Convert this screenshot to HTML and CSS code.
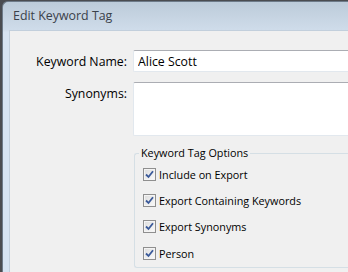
FILE: index.html
```html
<!DOCTYPE html>
<html lang="en">
<head>
  <meta charset="UTF-8">
  <title>Edit Keyword Tag</title>
  <link rel="stylesheet" href="styles.css">
</head>
<body>
  <div class="window">
    <div class="titlebar">Edit Keyword Tag</div>
    <div class="client">
      <div class="form">
        <label class="label" for="kwName">Keyword Name:</label>
        <input type="text" id="kwName" class="field" value="Alice Scott">
        <label class="label label-top" for="kwSyn">Synonyms:</label>
        <textarea id="kwSyn" class="field area"></textarea>
      </div>
      <fieldset class="group">
        <legend>Keyword Tag Options</legend>
        <label class="check"><span class="box"><svg viewBox="0 0 9 9" width="9" height="9"><path d="M1 4.5 L3.5 7 L8 1.2" fill="none" stroke="#3b5a9a" stroke-width="1.8"/></svg></span>Include on Export</label>
        <label class="check"><span class="box"><svg viewBox="0 0 9 9" width="9" height="9"><path d="M1 4.5 L3.5 7 L8 1.2" fill="none" stroke="#3b5a9a" stroke-width="1.8"/></svg></span>Export Containing Keywords</label>
        <label class="check"><span class="box"><svg viewBox="0 0 9 9" width="9" height="9"><path d="M1 4.5 L3.5 7 L8 1.2" fill="none" stroke="#3b5a9a" stroke-width="1.8"/></svg></span>Export Synonyms</label>
        <label class="check"><span class="box"><svg viewBox="0 0 9 9" width="9" height="9"><path d="M1 4.5 L3.5 7 L8 1.2" fill="none" stroke="#3b5a9a" stroke-width="1.8"/></svg></span>Person</label>
      </fieldset>
    </div>
  </div>
</body>
</html>
```

FILE: styles.css
```css
* {
  box-sizing: border-box;
}

html, body {
  margin: 0;
  padding: 0;
  width: 348px;
  height: 272px;
  overflow: hidden;
  background: #4a4c50;
  font-family: "Open Sans", "Noto Sans", sans-serif;
  font-size: 12.3px;
  color: #000;
}

.window {
  margin: 1px 0 0 2px;
  height: 271px;
  border-top-left-radius: 6px;
  border-top: 1px solid #6d7a88;
  border-left: 1px solid #6d7a88;
  background: linear-gradient(#bccbd9, #cfdcea 28px, #d6e3f1 30px);
  padding-left: 6px;
  display: flex;
  flex-direction: column;
}

.titlebar {
  height: 28px;
  padding: 5px 0 0 4px;
  color: #3a414a;
  font-size: 12.4px;
}

.client {
  flex: 1;
  background: #f0f0f0;
  border-left: 1px solid #c2cfdc;
  border-top: 1px solid #c2cfdc;
  padding-top: 19px;
}

.form {
  display: grid;
  grid-template-columns: 117px 1fr;
  column-gap: 6px;
  row-gap: 10px;
  align-items: center;
}

.label {
  text-align: right;
}

.label-top {
  align-self: start;
  padding-top: 3px;
}

.field {
  font: inherit;
  margin: 0;
  height: 22px;
  padding: 1px 4px;
  background: #fff;
  border: 1px solid #e2e8ee;
  border-top-color: #abadb3;
  border-right: none;
  border-radius: 2px 0 0 2px;
  color: #000;
  outline: none;
}

.area {
  height: 54px;
  resize: none;
}

.group {
  margin: 10px 0 0 124px;
  padding: 1px 0 0 8px;
  border: 1px solid #d5dfe5;
  border-right: none;
  border-radius: 3px 0 0 3px;
  height: 122px;
  font-size: 10.8px;
}

.group legend {
  padding: 0 2px;
  margin-left: -4px;
  line-height: 14px;
}

.check {
  display: flex;
  align-items: center;
  height: 26.3px;
  gap: 3px;
}

.box {
  width: 13px;
  height: 13px;
  border: 1px solid #8f8f8f;
  background: linear-gradient(135deg, #dcdcdc, #fbfbfb);
  display: flex;
  align-items: center;
  justify-content: center;
  box-shadow: inset 0 0 0 1px #f4f4f4;
}
```
